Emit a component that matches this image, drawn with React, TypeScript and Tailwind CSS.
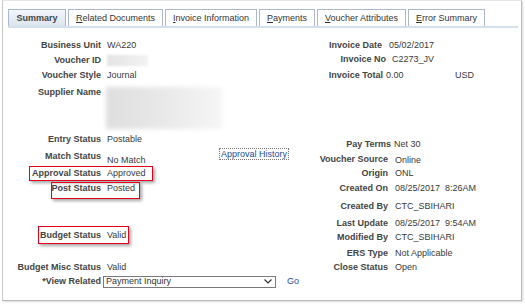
import React from 'react';

const tabs = [
  { key: 'S', rest: 'ummary', w: 'w-[58px]', active: true },
  { key: 'R', rest: 'elated Documents', w: 'w-[95px]' },
  { key: 'I', rest: 'nvoice Information', w: 'w-[92px]' },
  { key: 'P', rest: 'ayments', w: 'w-[56px]' },
  { key: 'V', rest: 'oucher Attributes', w: 'w-[89px]' },
  { key: 'E', rest: 'rror Summary', w: 'w-[77px]' },
];

function Label({ children, className = '' }: { children: React.ReactNode; className?: string }) {
  return <div className={`shrink-0 text-right font-bold text-[#444] ${className}`}>{children}</div>;
}

function RedBox({ className }: { className: string }) {
  return (
    <div className={`absolute border-[1.5px] border-[#e3001b] shadow-[2px_2px_3px_rgba(0,0,0,0.35)] pointer-events-none ${className}`} />
  );
}

export default function App() {
  return (
    <div className="w-[525px] h-[304px] bg-white font-['Liberation_Sans',Arial,sans-serif] text-[9px] leading-none text-[#3a3a3a] overflow-hidden">
      <div className="ml-[2px] w-[520px] h-[301px] border border-[#b9b9b9] border-t-[#e8e8e8] border-l-[#c9c9c9] shadow-[1px_1px_2px_rgba(0,0,0,0.15)]">
        {/* Tabs */}
        <div className="ml-[5px] mt-[8px] w-[510px] flex gap-[2px] border-b-2 border-[#d3dfec]">
          {tabs.map((t) => (
            <div
              key={t.key}
              className={`${t.w} h-[17px] flex items-center justify-center border border-b-0 ${
                t.active
                  ? 'border-[#a9b9cc] bg-gradient-to-b from-[#f3f6fa] to-[#dbe4ef] font-bold text-[#444]'
                  : 'border-[#aab8c9] bg-white text-[#333]'
              }`}
            >
              {t.active ? (
                <span>{t.key + t.rest}</span>
              ) : (
                <span>
                  <u>{t.key}</u>
                  {t.rest}
                </span>
              )}
            </div>
          ))}
        </div>

        {/* Form */}
        <div className="mt-[10px] flex items-start">
          {/* Left column */}
          <div className="w-[297px] flex flex-col">
            <div className="h-[15px] flex items-center">
              <Label className="w-[98px]">Business Unit</Label>
              <span className="ml-[6px]">WA220</span>
            </div>
            <div className="h-[15px] flex items-center">
              <Label className="w-[98px]">Voucher ID</Label>
              <div className="ml-[6px] w-[41px] h-[11px] bg-gradient-to-r from-[#e4e4e4] to-[#f3f3f3] blur-[1px]" />
            </div>
            <div className="h-[15px] flex items-center">
              <Label className="w-[98px]">Voucher Style</Label>
              <span className="ml-[6px]">Journal</span>
            </div>
            <div className="h-[47px] flex items-start">
              <Label className="w-[98px] pt-[5px]">Supplier Name</Label>
              <div className="ml-[5px] mt-[4px] w-[116px] h-[42px] bg-gradient-to-r from-[#dedede] via-[#e9e9e9] to-[#f6f6f6] blur-[2px]" />
            </div>
            <div className="h-[18px] flex items-center">
              <Label className="w-[98px]">Entry Status</Label>
              <span className="ml-[6px]">Postable</span>
            </div>
            <div className="h-[17px] flex items-start">
              <Label className="w-[98px] pt-[4px]">Match Status</Label>
              <span className="ml-[6px] w-[112px] pt-[8px]">No Match</span>
              <a className="h-[12px] px-[1px] flex items-center border border-dotted border-[#777] text-[#1a4f9e] no-underline">
                Approval History
              </a>
            </div>
            <div className="relative h-[16px] flex items-center">
              <Label className="w-[98px]">Approval Status</Label>
              <span className="ml-[6px]">Approved</span>
              <RedBox className="left-[26px] top-[1px] w-[124px] h-[15px]" />
            </div>
            <div className="relative h-[15px] flex items-center">
              <Label className="w-[98px]">Post Status</Label>
              <span className="ml-[6px]">Posted</span>
              <RedBox className="left-[48px] top-[1px] w-[89px] h-[17px]" />
            </div>
            <div className="relative mt-[31px] h-[16px] flex items-center">
              <Label className="w-[98px]">Budget Status</Label>
              <span className="ml-[6px]">Valid</span>
              <RedBox className="left-[35px] top-[-1px] w-[91px] h-[18px]" />
            </div>
            <div className="mt-[16px] h-[16px] flex items-center">
              <Label className="w-[98px]">Budget Misc Status</Label>
              <span className="ml-[6px]">Valid</span>
            </div>
            <div className="h-[13px] flex items-center">
              <Label className="w-[98px]">*View Related</Label>
              <div className="ml-[2px] w-[173px] h-[12px] flex items-center justify-between border border-[#7a7a7a] bg-white pl-[2px] pr-[3px] text-[#333]">
                <span>Payment Inquiry</span>
                <svg width="8" height="5" viewBox="0 0 8 5" fill="none">
                  <path d="M0.5 0.5 L4 4 L7.5 0.5" stroke="#333" strokeWidth="1.2" />
                </svg>
              </div>
              <a className="ml-[11px] text-[#1a4f9e]">Go</a>
            </div>
          </div>

          {/* Right column */}
          <div className="flex flex-col">
            <div className="h-[14px] flex items-center">
              <Label className="w-[82px]">Invoice Date</Label>
              <span className="ml-[7px]">05/02/2017</span>
            </div>
            <div className="h-[14px] flex items-center">
              <Label className="w-[86px]">Invoice No</Label>
              <span className="ml-[6px]">C2273_JV</span>
            </div>
            <div className="h-[18px] flex items-center">
              <Label className="w-[83px]">Invoice Total</Label>
              <span className="ml-[3px] w-[69px]">0.00</span>
              <span>USD</span>
            </div>
            <div className="mt-[53px] h-[14px] flex items-center">
              <Label className="w-[91px]">Pay Terms</Label>
              <span className="ml-[3px]">Net 30</span>
            </div>
            <div className="h-[16px] flex items-center">
              <Label className="w-[88px]">Voucher Source</Label>
              <span className="ml-[7px] pt-[2px]">Online</span>
            </div>
            <div className="h-[13px] flex items-center">
              <Label className="w-[88px]">Origin</Label>
              <span className="ml-[7px]">ONL</span>
            </div>
            <div className="h-[16px] flex items-center">
              <Label className="w-[88px]">Created On</Label>
              <span className="ml-[7px]">08/25/2017&nbsp;&nbsp;8:26AM</span>
            </div>
            <div className="h-[20px] flex items-center">
              <Label className="w-[88px]">Created By</Label>
              <span className="ml-[7px]">CTC_SBIHARI</span>
            </div>
            <div className="h-[14px] flex items-center">
              <Label className="w-[88px]">Last Update</Label>
              <span className="ml-[7px]">08/25/2017&nbsp;&nbsp;9:54AM</span>
            </div>
            <div className="h-[15px] flex items-center">
              <Label className="w-[88px]">Modified By</Label>
              <span className="ml-[7px]">CTC_SBIHARI</span>
            </div>
            <div className="h-[16px] flex items-center">
              <Label className="w-[88px]">ERS Type</Label>
              <span className="ml-[7px]">Not Applicable</span>
            </div>
            <div className="h-[12px] flex items-center">
              <Label className="w-[88px]">Close Status</Label>
              <span className="ml-[7px]">Open</span>
            </div>
          </div>
        </div>
      </div>
    </div>
  );
}
